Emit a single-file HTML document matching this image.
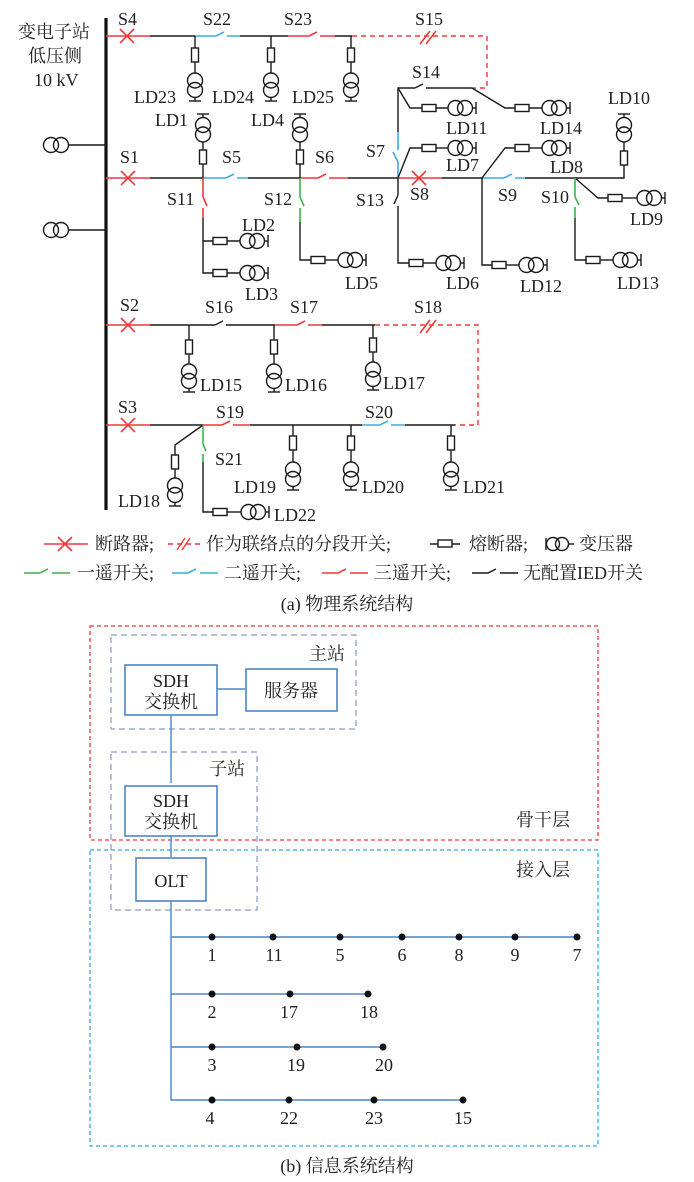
<!DOCTYPE html>
<html><head><meta charset="utf-8"><style>
html,body{margin:0;padding:0;background:#fff;}
svg{display:block;}
text{font-family:"Liberation Serif","Noto Serif CJK SC",serif;fill:#222;}
.k{stroke:#1a1a1a;stroke-width:1.4;fill:none;}
.r{stroke:#f0393c;stroke-width:1.6;fill:none;}
.b{stroke:#3aaee2;stroke-width:1.6;fill:none;}
.g{stroke:#3cb44b;stroke-width:1.6;fill:none;}
.rd{stroke:#f0393c;stroke-width:1.4;fill:none;stroke-dasharray:5 4;}
.bl{stroke:#4a86c8;stroke-width:1.6;fill:#fff;}
</style></head><body>
<svg width="694" height="1182" viewBox="0 0 694 1182" xmlns="http://www.w3.org/2000/svg">
<defs>
<g id="fv"><rect x="-3.5" y="0" width="7" height="14" class="k"/></g>
<g id="fh"><rect x="0" y="-3.5" width="14" height="7" class="k"/></g>
<g id="tv"><circle cx="0" cy="7.5" r="7.5" class="k"/><circle cx="0" cy="17" r="7.5" class="k"/><line x1="0" y1="24.5" x2="0" y2="28" class="k"/><line x1="-6" y1="28" x2="6" y2="28" class="k"/></g>
<g id="th"><circle cx="7.5" cy="0" r="7.5" class="k"/><circle cx="17" cy="0" r="7.5" class="k"/><line x1="24.5" y1="0" x2="28" y2="0" class="k"/><line x1="28" y1="-6" x2="28" y2="6" class="k"/></g>
<g id="x"><path d="M-7,-7L7,7M7,-7L-7,7" class="r"/></g>
</defs>

<line x1="106" y1="18" x2="106" y2="510" stroke="#111" stroke-width="3.2"/>
<text x="18" y="38" font-size="18">变电子站</text>
<text x="28" y="62" font-size="18">低压侧</text>
<text x="34" y="86" font-size="18">10 kV</text>
<g><circle cx="51" cy="145" r="7.5" class="k"/><circle cx="61" cy="145" r="7.5" class="k"/><line x1="68.5" y1="145" x2="106" y2="145" class="k"/></g>
<g><circle cx="51" cy="230" r="7.5" class="k"/><circle cx="61" cy="230" r="7.5" class="k"/><line x1="68.5" y1="230" x2="106" y2="230" class="k"/></g>

<line x1="106" y1="36" x2="150" y2="36" class="r"/><use href="#x" x="127" y="36"/>
<line x1="150" y1="36" x2="195" y2="36" class="k"/>
<path d="M195,36H216M216,36L224,32M227,36H240" class="b"/>
<line x1="240" y1="36" x2="288" y2="36" class="k"/>
<path d="M288,36H309M309,36L317,32M320,36H335" class="r"/>
<line x1="335" y1="36" x2="352" y2="36" class="k"/>
<path d="M352,36H487V88H472" class="rd"/>
<path d="M420,44L430,31M426,44L436,31" stroke="#f0393c" stroke-width="1.6"/>
<text x="118" y="25" font-size="18">S4</text>
<text x="203" y="25" font-size="18">S22</text>
<text x="284" y="25" font-size="18">S23</text>
<text x="415" y="25" font-size="18">S15</text>
<g class="k"><line x1="195" y1="36" x2="195" y2="48"/><line x1="195" y1="62" x2="195" y2="73"/></g><use href="#fv" x="195" y="48"/><use href="#tv" x="195" y="73"/>
<g class="k"><line x1="271" y1="36" x2="271" y2="48"/><line x1="271" y1="62" x2="271" y2="73"/></g><use href="#fv" x="271" y="48"/><use href="#tv" x="271" y="73"/>
<g class="k"><line x1="351" y1="36" x2="351" y2="48"/><line x1="351" y1="62" x2="351" y2="73"/></g><use href="#fv" x="351" y="48"/><use href="#tv" x="351" y="73"/>
<text x="134" y="103" font-size="18">LD23</text>
<text x="212" y="103" font-size="18">LD24</text>
<text x="292" y="103" font-size="18">LD25</text>

<line x1="106" y1="178" x2="150" y2="178" class="r"/><use href="#x" x="128" y="178"/>
<line x1="150" y1="178" x2="203" y2="178" class="k"/>
<path d="M203,178H226M226,178L234,174M237,178H248" class="b"/>
<line x1="248" y1="178" x2="300" y2="178" class="k"/>
<path d="M300,178H318M318,178L326,174M329,178H348" class="r"/>
<line x1="348" y1="178" x2="398" y2="178" class="k"/>
<line x1="398" y1="178" x2="442" y2="178" class="r"/><use href="#x" x="419" y="178"/>
<line x1="442" y1="178" x2="482" y2="178" class="k"/>
<path d="M482,178H504M504,178L512,174M515,178H525" class="b"/>
<path d="M525,178H624V165" class="k"/>
<text x="120" y="163" font-size="18">S1</text>
<text x="222" y="163" font-size="18">S5</text>
<text x="315" y="163" font-size="18">S6</text>
<g class="k"><line x1="203" y1="178" x2="203" y2="164"/><line x1="203" y1="150" x2="203" y2="142"/><line x1="300" y1="178" x2="300" y2="164"/><line x1="300" y1="150" x2="300" y2="142"/></g>
<use href="#fv" x="203" y="150"/><use href="#fv" x="300" y="150"/>
<g transform="translate(203,142) scale(1,-1)"><use href="#tv"/></g>
<g transform="translate(300,142) scale(1,-1)"><use href="#tv"/></g>
<text x="155" y="126" font-size="18">LD1</text>
<text x="251" y="126" font-size="18">LD4</text>
<path d="M203,178V197M203,197L207,206M203,208V218" class="r"/>
<path d="M203,218V273H213M203,241H213" class="k"/>
<use href="#fh" x="213" y="241"/><use href="#fh" x="213" y="273"/>
<path d="M227,241H240M227,273H240" class="k"/>
<use href="#th" x="240" y="241"/><use href="#th" x="240" y="273"/>
<text x="167" y="205" font-size="18">S11</text>
<text x="242" y="231" font-size="18">LD2</text>
<text x="245" y="300" font-size="18">LD3</text>
<path d="M300,178V197M300,197L304,206M300,208V222" class="g"/>
<path d="M300,222V260H311" class="k"/><use href="#fh" x="311" y="260"/>
<path d="M325,260H338" class="k"/><use href="#th" x="338" y="260"/>
<text x="264" y="205" font-size="18">S12</text>
<text x="345" y="289" font-size="18">LD5</text>
<path d="M398,178V162M398,162L393,152M398,150V132" class="b"/>
<path d="M398,132V88H415M415,88L423,84M426,88H472" class="k"/>
<path d="M398,88L410,108H422M472,88L505,108H515" class="k"/>
<use href="#fh" x="422" y="108"/><use href="#fh" x="515" y="108"/>
<path d="M436,108H448M529,108H542" class="k"/>
<use href="#th" x="448" y="108"/><use href="#th" x="542" y="108"/>
<text x="366" y="157" font-size="18">S7</text>
<text x="412" y="78" font-size="18">S14</text>
<text x="446" y="134" font-size="18">LD11</text>
<text x="540" y="134" font-size="18">LD14</text>
<path d="M398,178L410,148H422" class="k"/><use href="#fh" x="422" y="148"/>
<path d="M436,148H448" class="k"/><use href="#th" x="448" y="148"/>
<text x="446" y="171" font-size="18">LD7</text>
<text x="410" y="200" font-size="18">S8</text>
<path d="M398,178V195M398,195L394,204M398,206V263H409" class="k"/>
<use href="#fh" x="409" y="263"/><path d="M423,263H436" class="k"/><use href="#th" x="436" y="263"/>
<text x="356" y="206" font-size="18">S13</text>
<text x="446" y="289" font-size="18">LD6</text>
<path d="M482,178L505,148H515" class="k"/><use href="#fh" x="515" y="148"/>
<path d="M529,148H542" class="k"/><use href="#th" x="542" y="148"/>
<path d="M482,178V265H492" class="k"/><use href="#fh" x="492" y="265"/>
<path d="M506,265H519" class="k"/><use href="#th" x="519" y="265"/>
<text x="498" y="201" font-size="18">S9</text>
<text x="520" y="292" font-size="18">LD12</text>
<path d="M575,178L598,198H608" class="k"/><use href="#fh" x="608" y="198"/>
<path d="M622,198H637" class="k"/><use href="#th" x="637" y="198"/>
<path d="M575,178V197M575,197L579,205M575,207V218" class="g"/>
<path d="M575,218V260H586" class="k"/><use href="#fh" x="586" y="260"/>
<path d="M600,260H613" class="k"/><use href="#th" x="613" y="260"/>
<text x="550" y="173" font-size="18">LD8</text>
<text x="541" y="203" font-size="18">S10</text>
<text x="630" y="225" font-size="18">LD9</text>
<text x="617" y="289" font-size="18">LD13</text>
<use href="#fv" x="624" y="151"/><path d="M624,151V142" class="k"/>
<g transform="translate(624,142) scale(1,-1)"><use href="#tv"/></g>
<text x="608" y="104" font-size="18">LD10</text>

<line x1="106" y1="325" x2="150" y2="325" class="r"/><use href="#x" x="128" y="325"/>
<path d="M150,325H215M215,325L223,321M226,325H275" class="k"/>
<path d="M275,325H297M297,325L305,321M308,325H322" class="r"/>
<line x1="322" y1="325" x2="375" y2="325" class="k"/>
<path d="M375,325H478V425H455" class="rd"/>
<path d="M420,333L430,320M426,333L436,320" stroke="#f0393c" stroke-width="1.6"/>
<text x="120" y="311" font-size="18">S2</text>
<text x="205" y="313" font-size="18">S16</text>
<text x="290" y="313" font-size="18">S17</text>
<text x="414" y="313" font-size="18">S18</text>
<g class="k"><line x1="189" y1="325" x2="189" y2="340"/><line x1="189" y1="354" x2="189" y2="364"/><line x1="274" y1="325" x2="274" y2="340"/><line x1="274" y1="354" x2="274" y2="364"/><line x1="373" y1="325" x2="373" y2="338"/><line x1="373" y1="352" x2="373" y2="362"/></g>
<use href="#fv" x="189" y="340"/><use href="#fv" x="274" y="340"/><use href="#fv" x="373" y="338"/>
<use href="#tv" x="189" y="364"/><use href="#tv" x="274" y="364"/><use href="#tv" x="373" y="362"/>
<text x="200" y="391" font-size="18">LD15</text>
<text x="285" y="391" font-size="18">LD16</text>
<text x="383" y="389" font-size="18">LD17</text>

<line x1="106" y1="425" x2="150" y2="425" class="r"/><use href="#x" x="128" y="425"/>
<line x1="150" y1="425" x2="203" y2="425" class="k"/>
<path d="M203,425H222M222,425L230,421M233,425H250" class="r"/>
<line x1="250" y1="425" x2="362" y2="425" class="k"/>
<path d="M362,425H380M380,425L388,421M391,425H405" class="b"/>
<line x1="405" y1="425" x2="455" y2="425" class="k"/>
<text x="118" y="413" font-size="18">S3</text>
<text x="216" y="418" font-size="18">S19</text>
<text x="365" y="418" font-size="18">S20</text>
<path d="M203,425L175,445V455" class="k"/><use href="#fv" x="175" y="455"/>
<path d="M175,469V478" class="k"/><use href="#tv" x="175" y="478"/>
<text x="118" y="507" font-size="18">LD18</text>
<path d="M203,425V444M203,444L206,451M203,454V462" class="g"/>
<path d="M203,462V512H213" class="k"/><use href="#fh" x="213" y="512"/>
<path d="M227,512H241" class="k"/><use href="#th" x="241" y="512"/>
<text x="215" y="465" font-size="18">S21</text>
<text x="274" y="521" font-size="18">LD22</text>
<g class="k"><line x1="293" y1="425" x2="293" y2="436"/><line x1="293" y1="450" x2="293" y2="462"/><line x1="351" y1="425" x2="351" y2="436"/><line x1="351" y1="450" x2="351" y2="462"/><line x1="451" y1="425" x2="451" y2="436"/><line x1="451" y1="450" x2="451" y2="462"/></g>
<use href="#fv" x="293" y="436"/><use href="#fv" x="351" y="436"/><use href="#fv" x="451" y="436"/>
<use href="#tv" x="293" y="462"/><use href="#tv" x="351" y="462"/><use href="#tv" x="451" y="462"/>
<text x="234" y="493" font-size="18">LD19</text>
<text x="362" y="493" font-size="18">LD20</text>
<text x="463" y="493" font-size="18">LD21</text>

<line x1="44" y1="544" x2="88" y2="544" class="r"/><use href="#x" x="65" y="544"/>
<text x="95" y="550" font-size="18">断路器;</text>
<line x1="168" y1="544" x2="200" y2="544" class="rd" stroke-dasharray="3 3"/>
<path d="M177,550L185,538M182,550L190,538" stroke="#f0393c" stroke-width="1.4"/>
<text x="206" y="550" font-size="18">作为联络点的分段开关;</text>
<path d="M430,544H438M452,544H460" class="k"/><rect x="438" y="540" width="14" height="7" class="k"/>
<text x="469" y="550" font-size="18">熔断器;</text>
<line x1="546" y1="538" x2="546" y2="550" class="k"/><circle cx="553" cy="544" r="6.5" class="k"/><circle cx="562" cy="544" r="6.5" class="k"/><line x1="568" y1="544" x2="574" y2="544" class="k"/>
<text x="579" y="550" font-size="18">变压器</text>
<path d="M24,573H40L48,569M52,573H70" class="g"/><text x="77" y="579" font-size="18">一遥开关;</text>
<path d="M172,573H188L196,569M200,573H218" class="b"/><text x="224" y="579" font-size="18">二遥开关;</text>
<path d="M322,573H338L346,569M350,573H368" class="r"/><text x="374" y="579" font-size="18">三遥开关;</text>
<path d="M472,573H488L496,569M500,573H518" class="k"/><text x="523" y="579" font-size="18">无配置IED开关</text>
<text x="347" y="610" font-size="18" text-anchor="middle">(a) 物理系统结构</text>

<rect x="90" y="626" width="508" height="214" fill="none" stroke="#f0393c" stroke-width="1.3" stroke-dasharray="4 3"/>
<rect x="90" y="850" width="508" height="296" fill="none" stroke="#2bb0e8" stroke-width="1.3" stroke-dasharray="4 3"/>
<rect x="111" y="635" width="245" height="94" fill="none" stroke="#8a9cc0" stroke-width="1.2" stroke-dasharray="6 4"/>
<rect x="111" y="752" width="146" height="158" fill="none" stroke="#8a9cc0" stroke-width="1.2" stroke-dasharray="6 4"/>
<text x="309" y="660" font-size="18">主站</text>
<text x="209" y="775" font-size="18">子站</text>
<text x="516" y="826" font-size="18">骨干层</text>
<text x="516" y="876" font-size="18">接入层</text>
<path d="M171,714V783M171,834V857M171,901V1100H463M216,689H245M171,937H577M171,994H368M171,1047H383" stroke="#4a86c8" stroke-width="1.4" fill="none"/>
<rect x="125" y="665" width="92" height="50" class="bl"/>
<rect x="246" y="669" width="91" height="42" class="bl"/>
<rect x="125" y="786" width="92" height="50" class="bl"/>
<rect x="136" y="858" width="70" height="43" class="bl"/>
<text x="171" y="687" font-size="18" text-anchor="middle">SDH</text>
<text x="171" y="708" font-size="18" text-anchor="middle">交换机</text>
<text x="291" y="697" font-size="18" text-anchor="middle">服务器</text>
<text x="171" y="807" font-size="18" text-anchor="middle">SDH</text>
<text x="171" y="828" font-size="18" text-anchor="middle">交换机</text>
<text x="171" y="887" font-size="18" text-anchor="middle">OLT</text>
<g fill="#111">
<circle cx="212" cy="937" r="3.5"/><circle cx="273" cy="937" r="3.5"/><circle cx="340" cy="937" r="3.5"/><circle cx="402" cy="937" r="3.5"/><circle cx="459" cy="937" r="3.5"/><circle cx="515" cy="937" r="3.5"/><circle cx="577" cy="937" r="3.5"/>
<circle cx="212" cy="994" r="3.5"/><circle cx="290" cy="994" r="3.5"/><circle cx="368" cy="994" r="3.5"/>
<circle cx="212" cy="1047" r="3.5"/><circle cx="297" cy="1047" r="3.5"/><circle cx="383" cy="1047" r="3.5"/>
<circle cx="212" cy="1100" r="3.5"/><circle cx="289" cy="1100" r="3.5"/><circle cx="374" cy="1100" r="3.5"/><circle cx="463" cy="1100" r="3.5"/>
</g>
<g font-size="18" text-anchor="middle">
<text x="212" y="961">1</text><text x="274" y="961">11</text><text x="340" y="961">5</text><text x="402" y="961">6</text><text x="459" y="961">8</text><text x="515" y="961">9</text><text x="577" y="961">7</text>
<text x="212" y="1018">2</text><text x="289" y="1018">17</text><text x="369" y="1018">18</text>
<text x="212" y="1071">3</text><text x="296" y="1071">19</text><text x="384" y="1071">20</text>
<text x="210" y="1124">4</text><text x="289" y="1124">22</text><text x="374" y="1124">23</text><text x="463" y="1124">15</text>
</g>
<text x="347" y="1172" font-size="18" text-anchor="middle">(b) 信息系统结构</text>
</svg>
</body></html>
